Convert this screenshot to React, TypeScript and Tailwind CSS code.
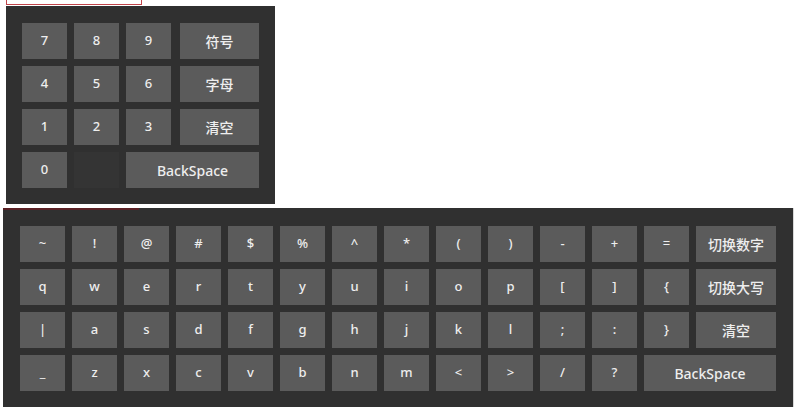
import React from "react";

const numRows: string[][] = [
  ["7", "8", "9", "符号"],
  ["4", "5", "6", "字母"],
  ["1", "2", "3", "清空"],
];

const symRow = ["~", "!", "@", "#", "$", "%", "^", "*", "(", ")", "-", "+", "=", "切换数字"];
const qRow = ["q", "w", "e", "r", "t", "y", "u", "i", "o", "p", "[", "]", "{", "切换大写"];
const aRow = ["|", "a", "s", "d", "f", "g", "h", "j", "k", "l", ";", ":", "}", "清空"];
const zRow = ["_", "z", "x", "c", "v", "b", "n", "m", "<", ">", "/", "?"];

const font = { fontFamily: '"Noto Sans", "Noto Sans CJK SC", sans-serif' };

const Key = ({ label, className = "" }: { label: string; className?: string }) => (
  <button
    className={`h-[36px] bg-[#5b5b5b] text-[#eeeeee] text-[13px] font-medium flex items-center justify-center ${className}`}
  >
    {label}
  </button>
);

export default function App() {
  return (
    <div className="w-[800px] h-[416px] bg-white overflow-hidden" style={font}>
      {/* focus box above the number pad */}
      <div className="ml-[6px] w-[136px] h-[5px] border-x border-b border-[#c0444a]" />

      {/* number pad */}
      <div className="ml-[6px] mt-[1px] w-[269px] h-[198px] bg-[#303030] pl-[16px] pt-[17px]">
        <div className="grid grid-cols-[45px_45px_45px_81px] gap-x-[7px] gap-y-[7px]">
          {numRows.map((row) =>
            row.map((k, i) => <Key key={k} label={k} className={i === 3 ? "ml-[2px] text-[14px]" : ""} />)
          )}
          <Key label="0" />
          <div className="h-[36px] bg-[#343434]" />
          <Key label="BackSpace" className="col-span-2 text-[14px]" />
        </div>
      </div>

      {/* full keyboard */}
      <div className="relative ml-[3px] mt-[4px] w-[790px] h-[199px] bg-[#303030] pl-[17px] pt-[18px] shadow-[1px_0_0_#d8d8d8]">
        <div className="absolute left-0 top-0 w-[136px] h-[2px] bg-[#5a2024]" />
        <div className="grid grid-cols-[repeat(13,45px)_80px] gap-x-[7px] gap-y-[7px]">
          {[symRow, qRow, aRow].map((row) =>
            row.map((k, i) => (
              <Key key={k + i} label={k} className={i === 13 ? "text-[14px]" : ""} />
            ))
          )}
          {zRow.map((k) => (
            <Key key={"z" + k} label={k} />
          ))}
          <Key label="BackSpace" className="col-span-2 text-[14px]" />
        </div>
      </div>
    </div>
  );
}
